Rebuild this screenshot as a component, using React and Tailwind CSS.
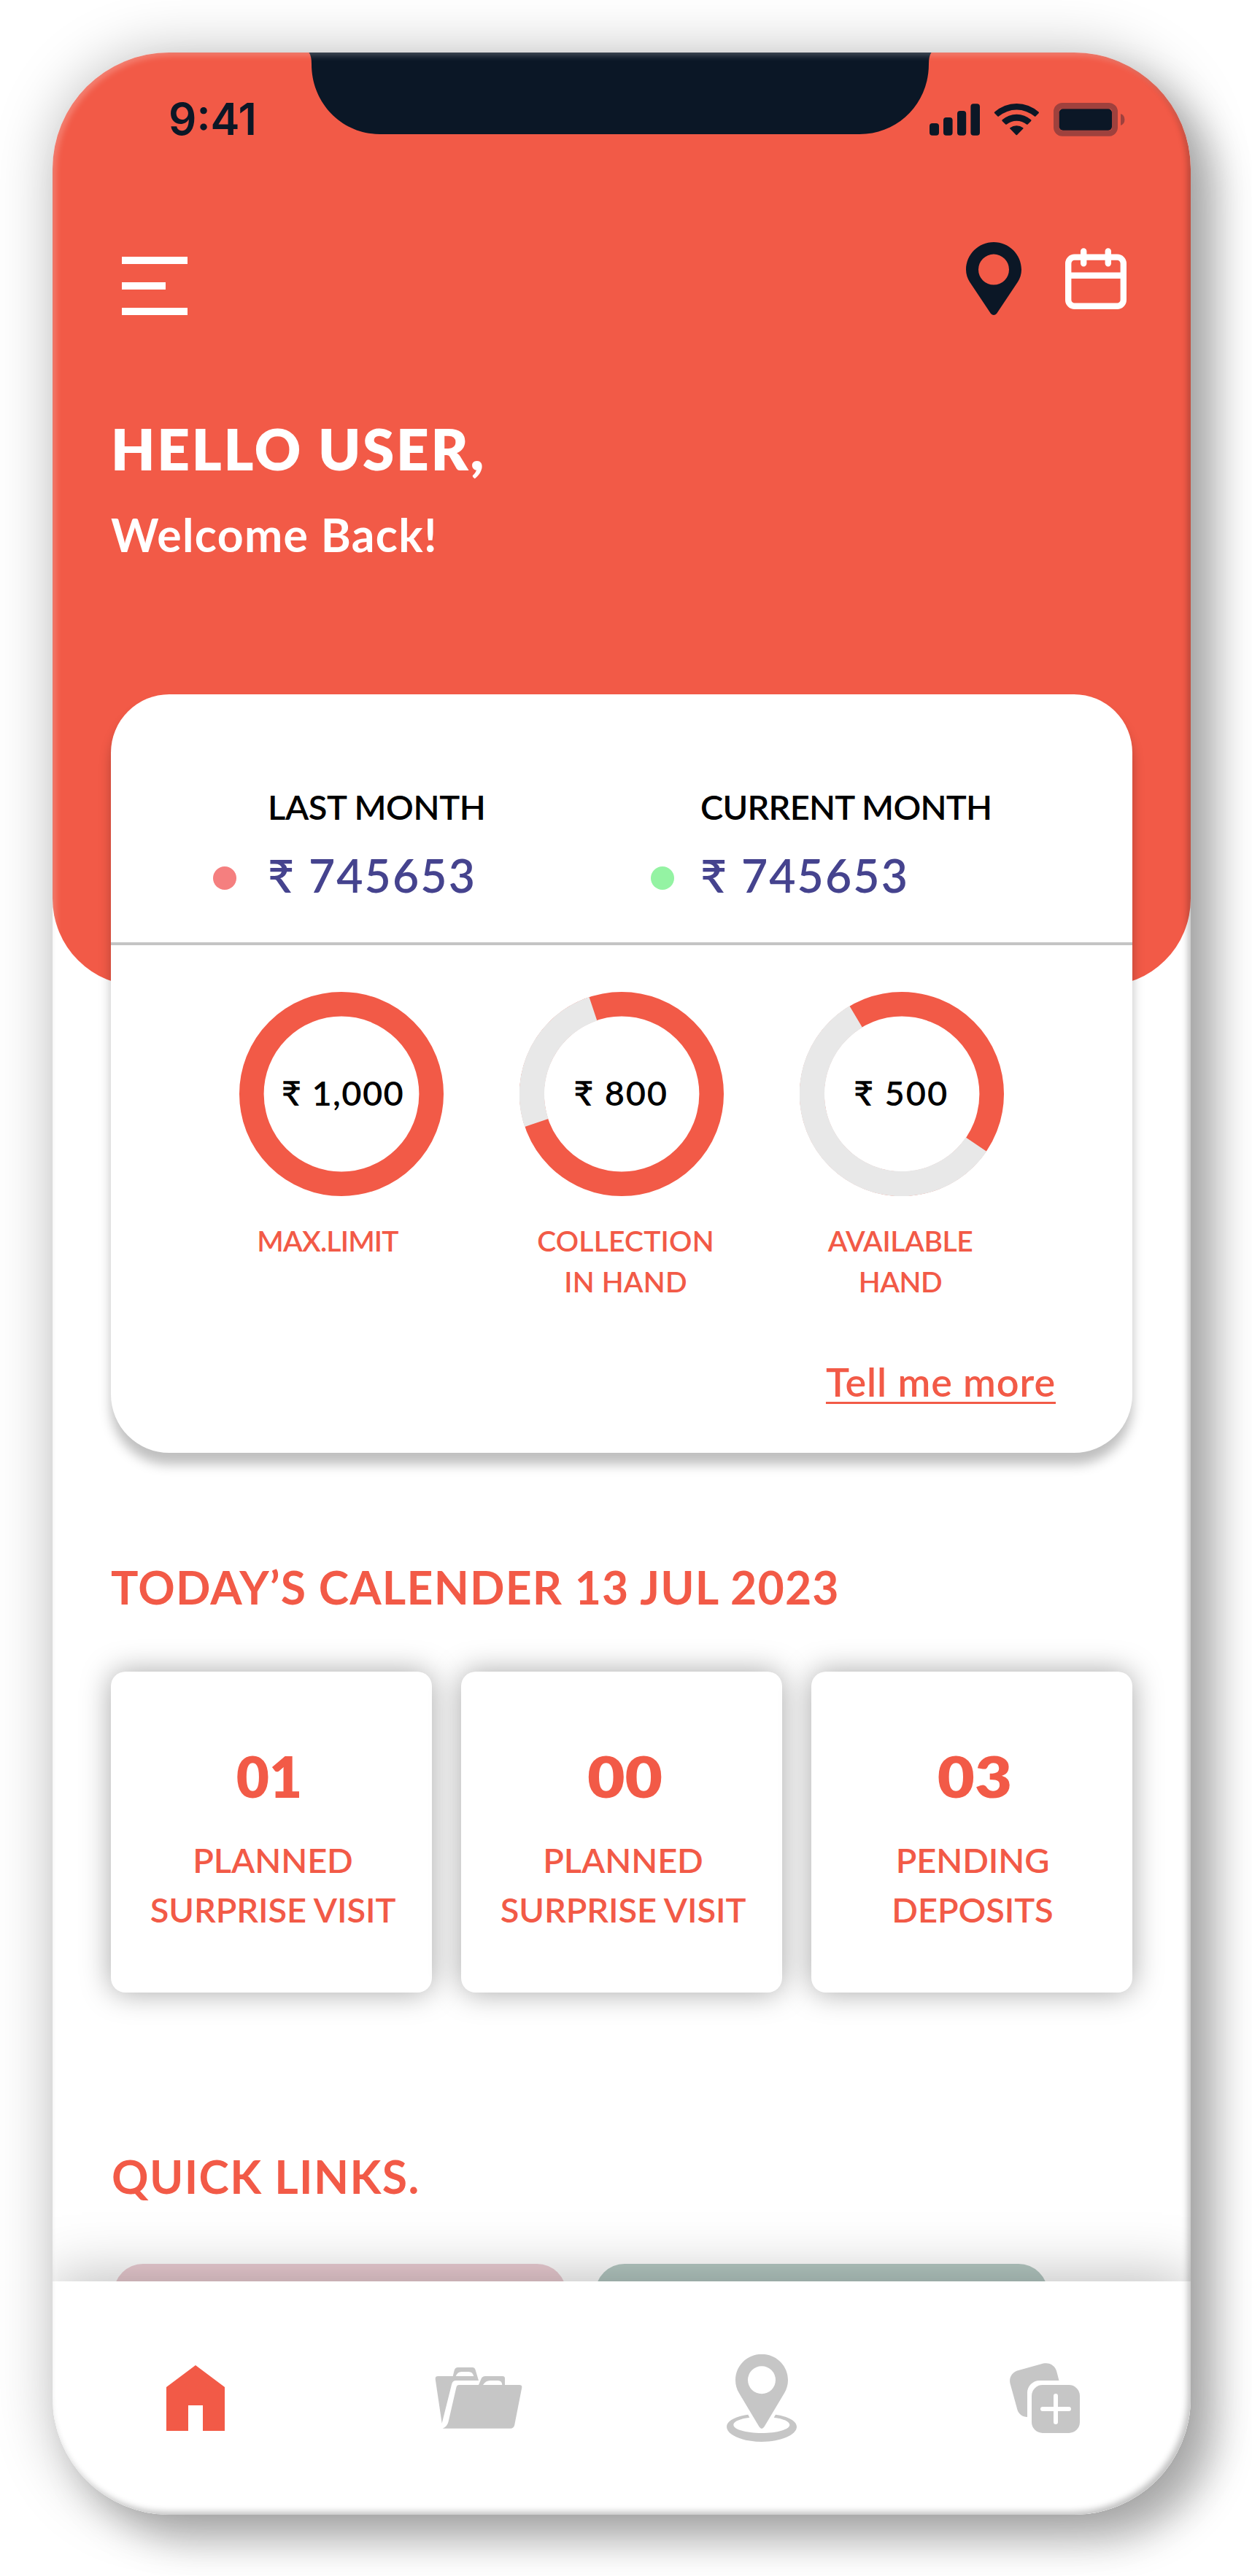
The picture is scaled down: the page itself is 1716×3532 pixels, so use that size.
import React from "react";

const months = [
  { label: "LAST MONTH", amount: "₹ 745653", dot: "bg-[#f57f7f] mr-[43px]", col: "w-[600px]", track: "tracking-[-0.4px]" },
  { label: "CURRENT MONTH", amount: "₹ 745653", dot: "bg-[#94f3a3] mr-9", col: "", track: "tracking-[-0.75px]" },
];

const limits = [
  { value: "₹ 1,000", lines: ["MAX.LIMIT"], rest: null, pad: "pr-[38px]", track: "tracking-[-0.8px]", vpad: "pl-1 tracking-[1.4px]" },
  { value: "₹ 800", lines: ["COLLECTION", "IN HAND"], rest: [251.3, 341.5], pad: "pl-[11px]", track: "tracking-[0.2px]", vpad: "pr-0.5 tracking-[1.8px]" },
  { value: "₹ 500", lines: ["AVAILABLE", "HAND"], rest: [124.1, 329.3], pad: "pr-1", track: "tracking-[-0.4px]", vpad: "pr-0.5 tracking-[1.9px]" },
];

const visits = [
  { count: "01", lines: ["PLANNED", "SURPRISE VISIT"], num: "pr-[6px]", pad: "pl-1" },
  { count: "00", lines: ["PLANNED", "SURPRISE VISIT"], num: "scale-x-[1.14] pl-[8px]", pad: "pl-1" },
  { count: "03", lines: ["PENDING", "DEPOSITS"], num: "scale-x-[1.13] pl-[7px]", pad: "pl-0.5" },
];

function point(deg, r) {
  const a = (deg * Math.PI) / 180;
  return `${140 + r * Math.sin(a)} ${140 - r * Math.cos(a)}`;
}

function Ring({ rest }) {
  return (
    <svg viewBox="0 0 280 280" className="h-[280px] w-[280px] [grid-area:1/1]" fill="none" strokeWidth="33.6">
      <circle cx="140" cy="140" r="123.2" stroke="#f25a47" />
      {rest && (
        <path
          d={`M${point(rest[0], 140.3)} A140.3 140.3 0 ${rest[1] - rest[0] > 180 ? 1 : 0} 1 ${point(rest[1], 140.3)} L${point(rest[1], 106)} A106 106 0 ${rest[1] - rest[0] > 180 ? 1 : 0} 0 ${point(rest[0], 106)}Z`}
          fill="#e8e8e8"
          stroke="none"
        />
      )}
    </svg>
  );
}

function StatusIcons() {
  return (
    <svg viewBox="1274 140 268 48" className="mt-[68px] h-12 w-[268px]" fill="#0b1726">
      <rect x="1274" y="169" width="13" height="16.8" rx="4" />
      <rect x="1293" y="161" width="12.6" height="24.8" rx="4" />
      <rect x="1312" y="152" width="12.2" height="33.8" rx="4" />
      <rect x="1330.4" y="142.3" width="12.6" height="43.5" rx="4" />
      <path d="M1363.2 153.6 A45 45 0 0 1 1423.6 153.6 Q1424.3 154.5 1423.6 155.3 L1419.4 159.6 Q1418.7 160.2 1418 159.6 A38 38 0 0 0 1368.8 159.6 Q1368.2 160.2 1367.4 159.6 L1363.2 155.3 Q1362.4 154.5 1363.2 153.6Z" />
      <path d="M1373.6 164.3 A29.5 29.5 0 0 1 1413.2 164.3 Q1413.8 165.2 1413.2 165.9 L1408.6 170.5 Q1407.8 171.2 1407 170.5 A22 22 0 0 0 1379.8 170.5 Q1379 171.2 1378.2 170.5 L1373.6 165.9 Q1373 165.2 1373.6 164.3Z" />
      <path d="M1384.4 175.2 A15 15 0 0 1 1402.3 175.2 Q1403 176 1402.3 176.6 L1394 184.9 Q1393.3 185.6 1392.6 184.9 L1384.4 176.6 Q1383.6 176 1384.4 175.2Z" />
      <rect x="1448" y="145" width="80" height="37.7" rx="8" fill="none" stroke="#9f413d" strokeWidth="8" />
      <rect x="1451.8" y="149.2" width="72.2" height="29.6" rx="5" />
      <path d="M1536 156 A8.6 8.6 0 0 1 1536 172Z" fill="#9f413d" />
    </svg>
  );
}

function HeaderPin() {
  return (
    <svg viewBox="0 0 76 100" className="h-[100px] w-[76px]" fill="#0b1726" fillRule="evenodd">
      <path d="M38 0 C59 0 76 17 76 37.7 C76 44 74 49.5 71 54.5 L42 98 Q38 102 34 98 L5 54.5 C2 49.5 0 44 0 37.7 C0 17 17 0 38 0Z M38 16.6 A21 21 0 1 0 38 58.6 A21 21 0 1 0 38 16.6Z" />
    </svg>
  );
}

function CalendarIcon() {
  return (
    <svg viewBox="0 0 84 84" className="mt-2 h-[84px] w-[84px]" fill="none" stroke="#fff" strokeWidth="8.4">
      <rect x="4.2" y="12.6" width="75.6" height="67.2" rx="8.6" />
      <path d="M4 37.7 H80" />
      <path d="M25.2 4.4 V21.2 M58.8 4.4 V21.2" strokeLinecap="round" />
    </svg>
  );
}

function HomeIcon() {
  return (
    <svg viewBox="0 0 120 120" className="h-[120px] w-[120px]" fill="#f25a47">
      <path d="M60 15 L100 45 V105 H70 V70 H50 V105 H20 V45Z" />
    </svg>
  );
}

function FolderIcon() {
  return (
    <svg viewBox="0 0 120 120" className="h-[120px] w-[120px]" fill="#c6c6c6" fillRule="evenodd">
      <path d="M0.7 34 Q0.4 30 4.4 30 H24.7 L26.7 22 Q27.8 18 31.7 18 H51.5 Q54.5 18 55.5 21 L60 36 H29 Q24.3 36 23.2 40.7 L9.7 94.7Z M28.7 30 H53.3 Q51.8 24 46.5 24 H36.5 Q31 24 28.7 30Z" />
      <path d="M10.7 101.7 Q17 99.5 18.7 92 L29.5 45 Q30.2 42 33.2 42 H60 L63.6 33.5 Q65 30 69 30 H92.7 Q96 30 96 33.3 V42 H116 Q120 42 119.2 46 L109.2 97 Q108.2 101.7 103.5 101.7Z M66 42 H92.3 Q92 36 86.5 36 H76 Q69.5 36 66 42Z" />
    </svg>
  );
}

function LocationIcon() {
  return (
    <svg viewBox="0 0 120 120" className="h-[120px] w-[120px]" fill="#c6c6c6" fillRule="evenodd">
      <path d="M60 -0.2 C80 -0.2 96 15.8 96 35.3 C96 42 94.2 48 91 53.3 L63.4 99.5 Q60 104.3 56.6 99.5 L29 53.3 C25.8 48 24 42 24 35.3 C24 15.8 40 -0.2 60 -0.2Z M60 16.3 A19 19 0 1 0 60 54.3 A19 19 0 1 0 60 16.3Z" />
      <path d="M41.3 82.7 C24 85 12 91.5 12 99.3 C12 110.6 33.5 119.9 60 119.9 S108 110.6 108 99.3 C108 91.5 96 85 79 82.7 L76.7 86.7 C89.5 88.3 98.3 92 98.3 96.7 C98.3 103 81 108 60 108 S21.3 103 21.3 96.7 C21.3 92 30.5 88.3 43.3 86.7Z" />
    </svg>
  );
}

function AddCardIcon() {
  return (
    <svg viewBox="0 0 120 120" className="h-[120px] w-[120px]" fill="#c6c6c6">
      <path d="M12.5 40 C10.6 31.6 15.6 24 24 22 L58 12.6 C66.5 10.6 74.3 15.6 76.3 23.7 L79.5 36 H53 C43.4 36 36 43.6 36 53 V86 C29.5 86 24.2 82 22.4 76Z" />
      <rect x="42" y="42" width="66" height="66" rx="15" />
      <path d="M75 57 V93 M57 75 H93" stroke="#fff" strokeWidth="6" strokeLinecap="round" />
    </svg>
  );
}

function Header() {
  return (
    <header className="h-[1280px] rounded-b-[120px] bg-[#f25a47]">
      <div className="relative flex h-28 justify-between pl-[159px] pr-[90px]">
        <span className="mt-[61px] font-['Inter',sans-serif] text-[60px] font-semibold leading-[60px] text-[#0b1726]">9:41</span>
        <svg viewBox="0 0 854 112" className="absolute left-[351px] top-0 h-28 w-[854px]" fill="#0b1726">
          <path d="M0.5 0 H853.5 Q850 5 850 16 C850 70 808 112 755 112 H98 C46 112 4 70 4 16 Q4 5 0.5 0Z" />
        </svg>
        <StatusIcons />
      </div>
      <div className="mt-[148px] flex h-[100px] items-start pl-[95px] pr-[88px]">
        <div className="mt-5 flex flex-col gap-[25px]">
          <div className="h-2.5 w-[90px] bg-white" />
          <div className="h-2.5 w-[60px] bg-white" />
          <div className="h-2.5 w-[90px] bg-white" />
        </div>
        <div className="ml-auto flex items-start gap-[60px]">
          <HeaderPin />
          <CalendarIcon />
        </div>
      </div>
      <div className="mt-[144px] pl-20 text-white">
        <h1 className="text-[78px] font-extrabold leading-[78px] tracking-[2.76px]">HELLO USER,</h1>
        <p className="mt-[47px] text-[62.5px] font-bold leading-[64px] tracking-[1.33px]">Welcome Back!</p>
      </div>
    </header>
  );
}

function SummaryCard() {
  return (
    <section className="relative mx-20 -mt-[400px] h-[1040px] rounded-[80px] bg-white shadow-[0_16px_16px_rgba(0,0,0,0.25)]">
      <div className="flex h-[344px] border-b-4 border-[#c4c4c4] pl-[140px] pt-[120px]">
        {months.map((m) => (
          <div key={m.label} className={`flex items-start ${m.col}`}>
            <span className={`mt-[116px] size-8 rounded-full ${m.dot}`} />
            <div>
              <div className={`text-[47px] font-semibold leading-[68px] text-black ${m.track}`}>{m.label}</div>
              <div className="mt-3.5 text-[62.5px] font-semibold leading-[92px] tracking-[2.1px] text-[#45438e]">{m.amount}</div>
            </div>
          </div>
        ))}
      </div>
      <div className="flex gap-[104px] pl-44 pt-16">
        {limits.map((l) => (
          <div key={l.value} className="h-[425px] w-[280px]">
            <div className="grid place-items-center">
              <Ring rest={l.rest} />
              <span className={`pb-1 text-[47px] font-semibold leading-[47px] text-black [grid-area:1/1] ${l.vpad}`}>{l.value}</span>
            </div>
            <div className={`mt-[33px] text-center text-[39px] font-semibold leading-[56px] text-[#f25a47] ${l.pad} ${l.track}`}>
              {l.lines.map((t) => (
                <div key={t}>{t}</div>
              ))}
            </div>
          </div>
        ))}
      </div>
      <div className="mt-[78px] pr-[105px] text-right">
        <a className="text-[54px] font-semibold leading-[64px] tracking-[0.9px] text-[#f25a47] underline decoration-[3px] underline-offset-[7px] [text-decoration-skip-ink:none]">Tell me more</a>
      </div>
    </section>
  );
}

export default function App() {
  return (
    <div className="h-[3532px] w-[1716px] overflow-hidden bg-white pl-[72px] pt-[72px] font-['Lato',sans-serif]">
      <div className="relative h-[3376px] w-[1560px] rounded-[160px] shadow-[0_0_80px_rgba(0,0,0,0.25),36px_36px_52px_rgba(0,0,0,0.25)]">
        <div className="h-full overflow-hidden rounded-[160px] bg-white">
          <main className="h-[3056px] overflow-hidden">
            <Header />
            <SummaryCard />
            <h2 className="ml-20 mt-[138px] text-[62.5px] font-bold leading-[92px] tracking-[1.2px] text-[#f25a47]">TODAY’S CALENDER 13 JUL 2023</h2>
            <div className="mx-20 mt-[70px] flex gap-10">
              {visits.map((v) => (
                <div
                  key={v.count}
                  className="h-[440px] w-[440px] rounded-[20px] bg-white pt-[104px] text-center text-[#f25a47] shadow-[0_0_40px_rgba(0,0,0,0.35)]"
                >
                  <div className={`text-[78px] font-extrabold leading-[78px] ${v.num}`}>{v.count}</div>
                  <div className={`mt-[42px] text-[47px] font-semibold leading-[68px] tracking-[-0.1px] ${v.pad}`}>
                    {v.lines.map((t) => (
                      <div key={t}>{t}</div>
                    ))}
                  </div>
                </div>
              ))}
            </div>
            <h2 className="ml-[81px] mt-[206px] text-[62.5px] font-bold leading-[92px] tracking-[1.39px] text-[#f25a47]">QUICK LINKS.</h2>
            <div className="ml-[84px] mt-[74px] flex gap-10">
              <div className="h-80 w-[620px] rounded-[40px] bg-[#ebcdd3]" />
              <div className="h-80 w-[620px] rounded-[40px] bg-[#b5c9c3]" />
            </div>
          </main>
          <nav className="relative z-10 flex h-80 items-center bg-white pl-0.5 shadow-[0_-4px_80px_rgba(0,0,0,0.28)]">
            <div className="flex w-[388px] justify-center"><HomeIcon /></div>
            <div className="flex w-[388px] justify-center"><FolderIcon /></div>
            <div className="flex w-[388px] justify-center"><LocationIcon /></div>
            <div className="flex w-[388px] justify-center"><AddCardIcon /></div>
          </nav>
        </div>
        <div className="pointer-events-none absolute inset-0 z-20 rounded-[160px] shadow-[inset_4px_4px_8px_rgba(255,255,255,0.25),inset_-4px_-4px_8px_rgba(0,0,0,0.25)]" />
      </div>
    </div>
  );
}
